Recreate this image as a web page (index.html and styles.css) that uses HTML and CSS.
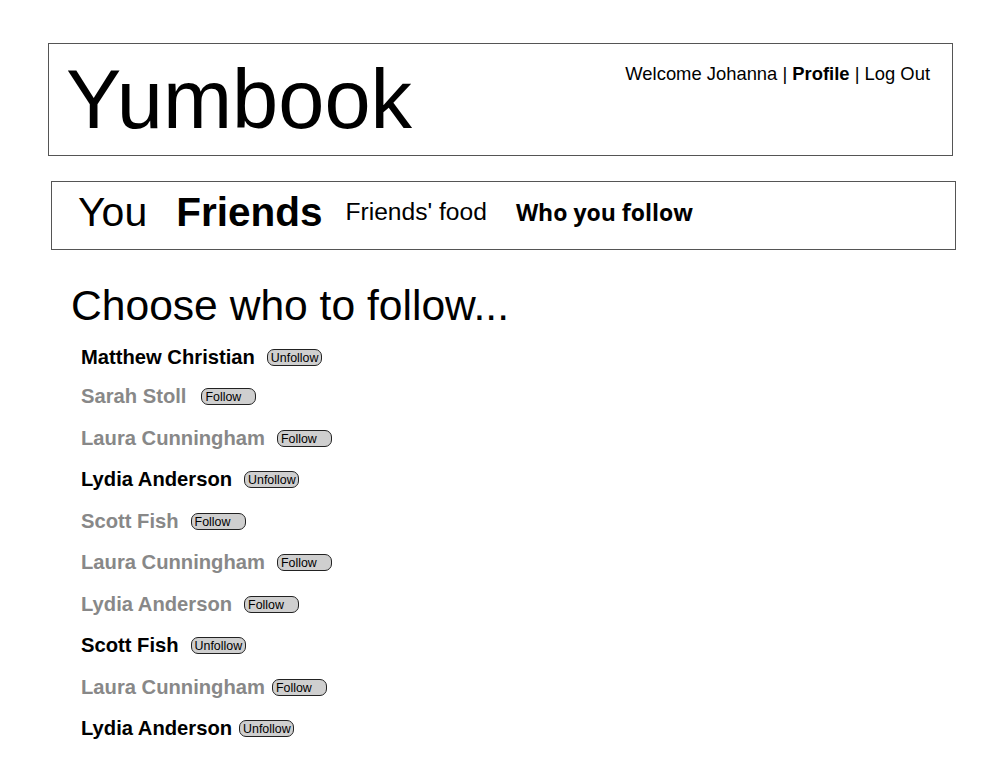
FILE: index.html
```html
<!DOCTYPE html>
<html>
<head>
<meta charset="utf-8">
<title>Yumbook</title>
<link rel="stylesheet" href="styles.css">
</head>
<body>
<header class="header">
  <div class="logo">Yumbook</div>
  <div class="welcome">Welcome Johanna | <b>Profile</b> | Log Out</div>
</header>
<nav class="nav">
  <span class="nav-you">You</span>
  <span class="nav-friends">Friends</span>
  <span class="nav-food">Friends' food</span>
  <span class="nav-follow">Who you follow</span>
</nav>
<h1 class="title">Choose who to follow...</h1>
<ul class="people">
  <li class="person on"><span class="name">Matthew Christian</span><button class="btn">Unfollow</button></li>
  <li class="person"><span class="name">Sarah Stoll</span><button class="btn btn-wide">Follow</button></li>
  <li class="person"><span class="name">Laura Cunningham</span><button class="btn">Follow</button></li>
  <li class="person on"><span class="name">Lydia Anderson</span><button class="btn">Unfollow</button></li>
  <li class="person"><span class="name">Scott Fish</span><button class="btn">Follow</button></li>
  <li class="person"><span class="name">Laura Cunningham</span><button class="btn">Follow</button></li>
  <li class="person"><span class="name">Lydia Anderson</span><button class="btn">Follow</button></li>
  <li class="person on"><span class="name">Scott Fish</span><button class="btn">Unfollow</button></li>
  <li class="person"><span class="name">Laura Cunningham</span><button class="btn btn-close">Follow</button></li>
  <li class="person on"><span class="name">Lydia Anderson</span><button class="btn btn-close">Unfollow</button></li>
</ul>
</body>
</html>
```

FILE: styles.css
```css
* { box-sizing: border-box; }
body {
  margin: 0;
  padding-top: 43px;
  background: #fff;
  color: #000;
  font-family: "Liberation Sans", Arial, sans-serif;
}
.header {
  margin-left: 48px;
  width: 905px;
  height: 113px;
  border: 1px solid #555;
  display: flex;
  justify-content: space-between;
  align-items: flex-start;
}
.logo {
  font-size: 83px;
  line-height: 83px;
  margin: 14px 0 0 17px;
}
.welcome {
  font-size: 18.4px;
  line-height: 18px;
  margin: 21px 22px 0 0;
}
.nav {
  margin: 25px 0 0 51px;
  width: 905px;
  height: 69px;
  border: 1px solid #555;
  display: flex;
  align-items: center;
  padding: 0 0 6px 26px;
}
.nav span { line-height: 1; }
.nav-you { font-size: 41px; }
.nav-friends { font-size: 40.5px; font-weight: bold; margin-left: 29px; }
.nav-food { font-size: 24.6px; margin-left: 23px; }
.nav-follow {
  font-family: "Open Sans", sans-serif;
  font-weight: bold;
  font-size: 23px;
  margin-left: 29px;
}
.title {
  margin: 34px 0 0 71px;
  font-size: 42.6px;
  line-height: 42px;
  font-weight: normal;
}
.people {
  list-style: none;
  margin: 12px 0 0 81px;
  padding: 0;
}
.person {
  height: 41.5px;
  display: flex;
  align-items: center;
  color: #888;
}
.person:first-child { height: 38px; margin-top: 1px; }
.person.on { color: #000; }
.name {
  font-size: 20.2px;
  font-weight: bold;
  line-height: 41px;
}
.btn {
  margin-left: 12px;
  width: 55px;
  height: 17px;
  padding: 1px 0 0 3px;
  border: 1px solid #222;
  border-radius: 7px;
  background: #cfcfcf;
  color: #000;
  font-family: "Liberation Sans", Arial, sans-serif;
  font-size: 12.4px;
  line-height: 14px;
  text-align: left;
}
.btn-wide { margin-left: 15px; }
.btn-close { margin-left: 7px; }
```
